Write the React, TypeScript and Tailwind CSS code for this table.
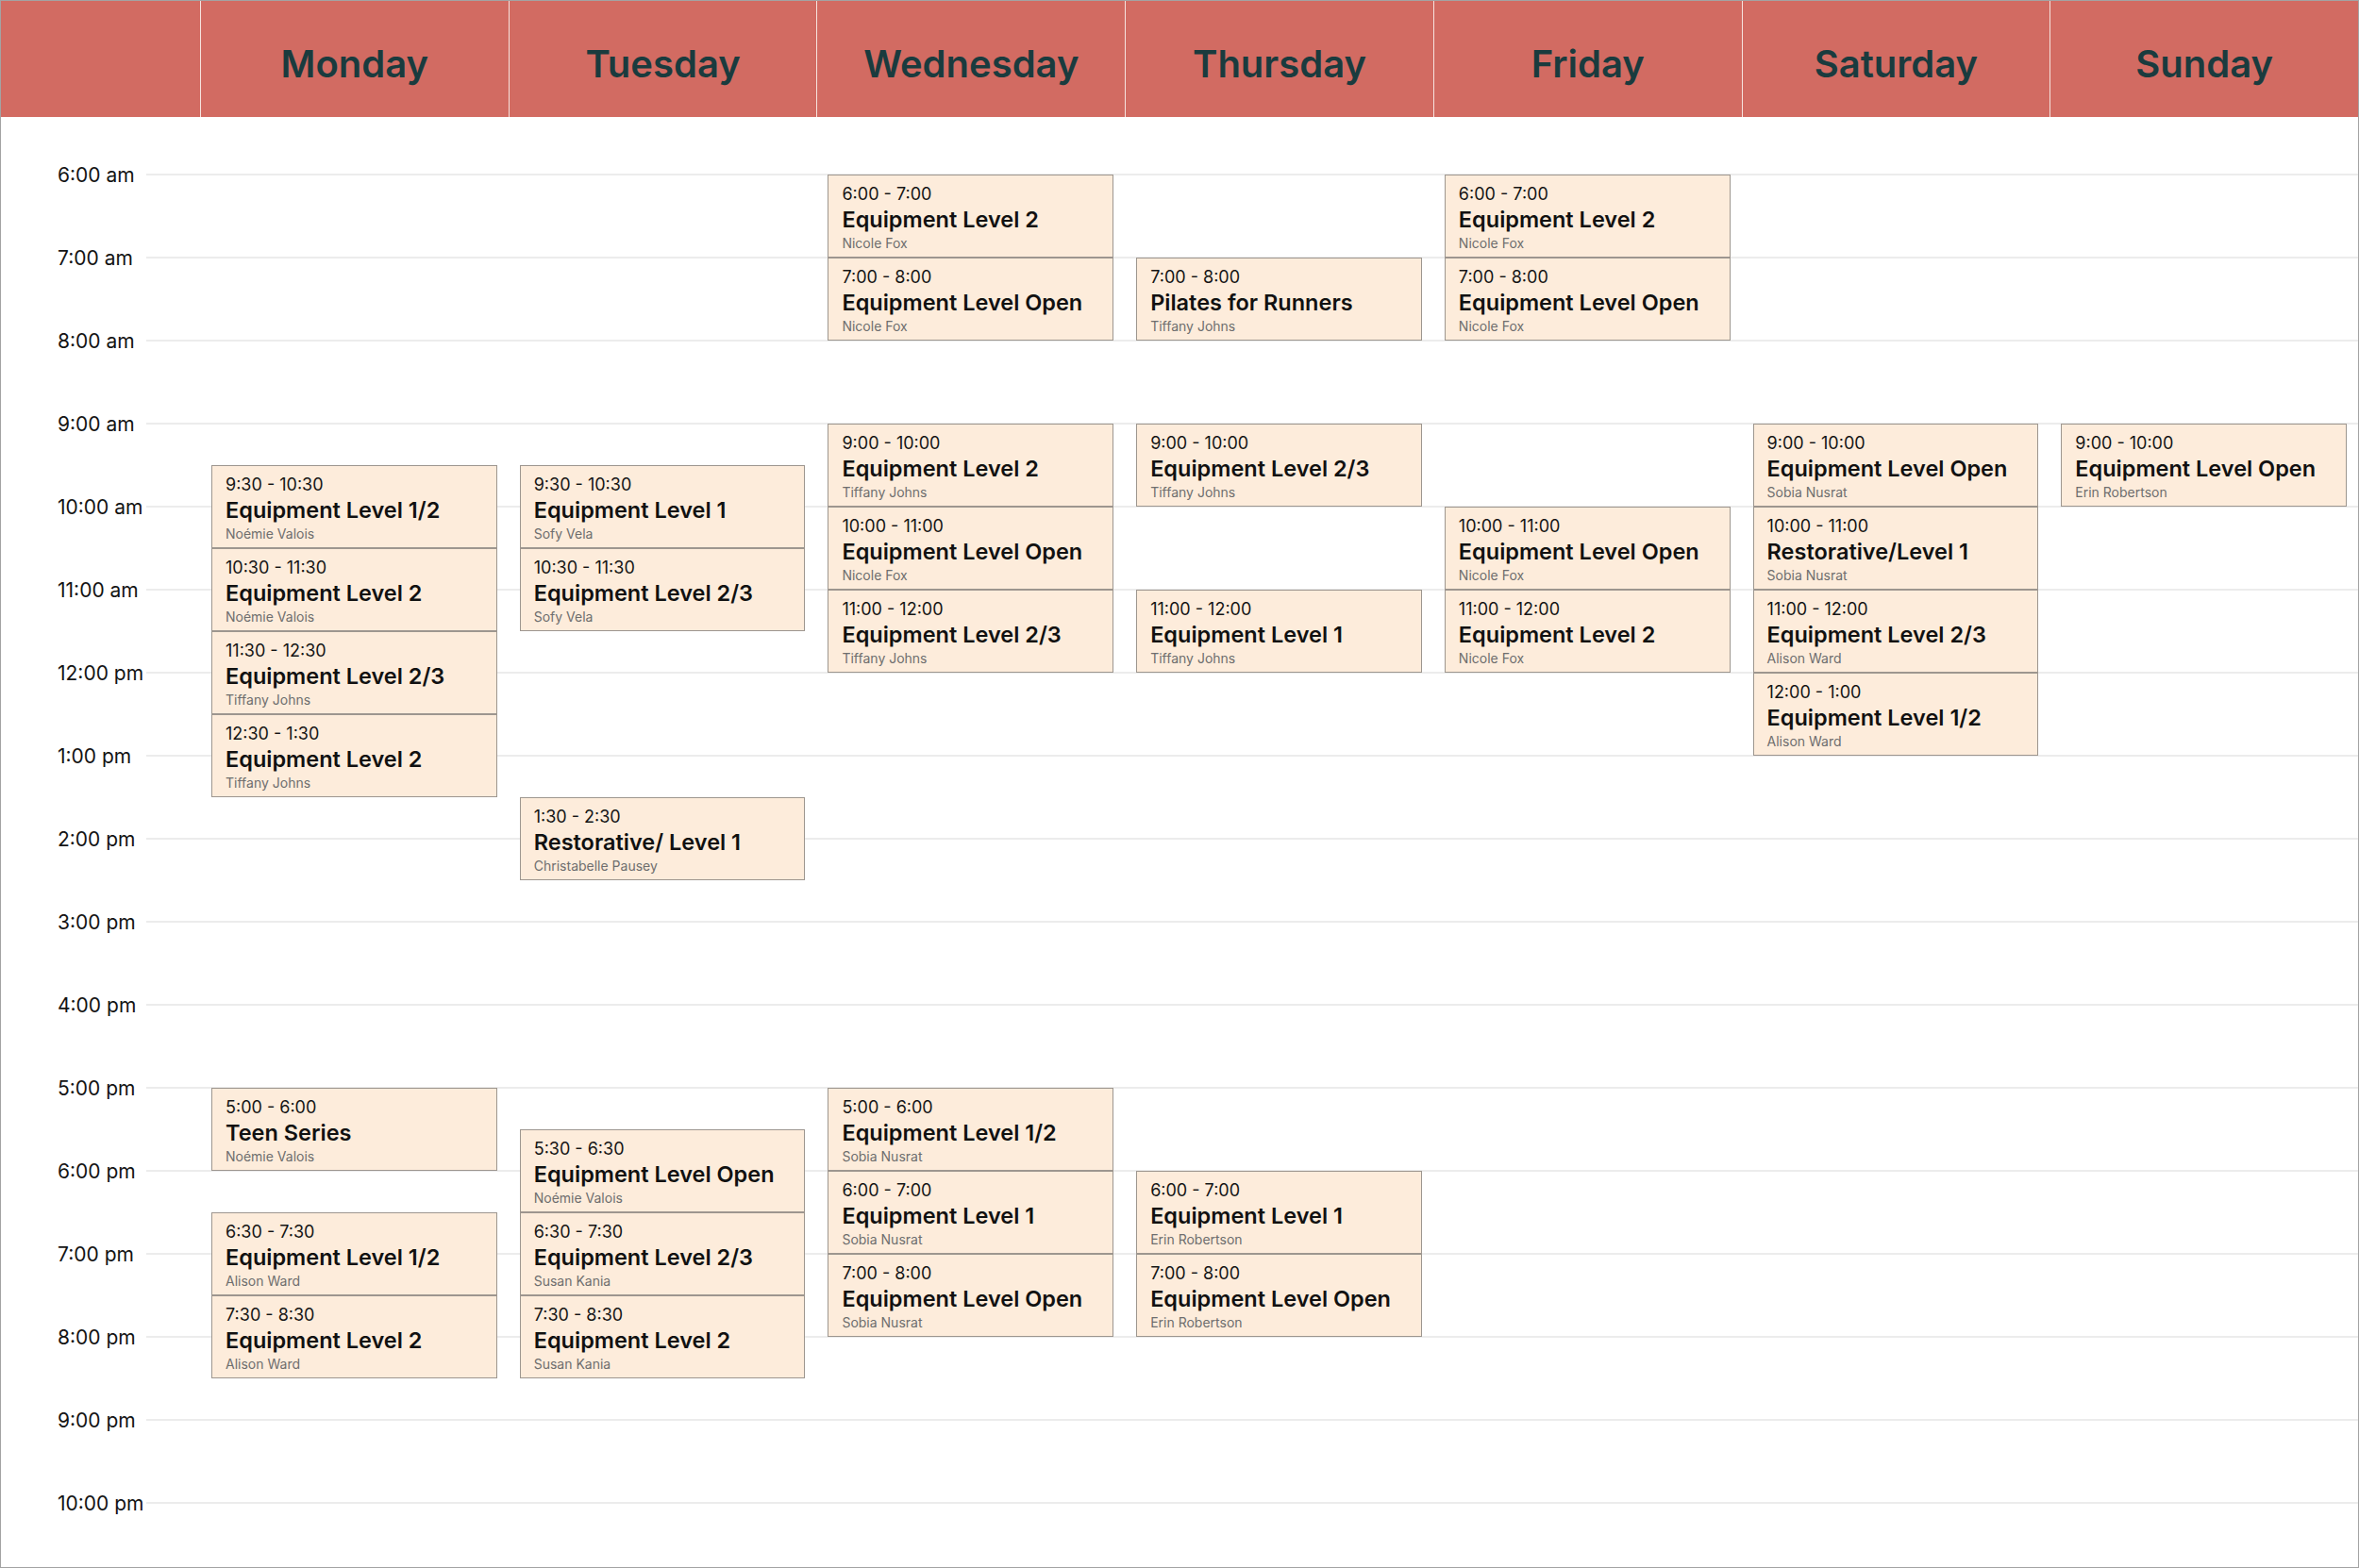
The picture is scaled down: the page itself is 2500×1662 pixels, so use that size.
type Slot = {
  day: number;
  start: number;
  end: number;
  time: string;
  title: string;
  teacher: string;
};

const days = ["Monday", "Tuesday", "Wednesday", "Thursday", "Friday", "Saturday", "Sunday"];

const hours = [
  "6:00 am", "7:00 am", "8:00 am", "9:00 am", "10:00 am", "11:00 am", "12:00 pm", "1:00 pm", "2:00 pm",
  "3:00 pm", "4:00 pm", "5:00 pm", "6:00 pm", "7:00 pm", "8:00 pm", "9:00 pm", "10:00 pm",
];

const classes: Slot[] = [
  // monday
  { day: 0, start: 9.5, end: 10.5, time: "9:30 - 10:30", title: "Equipment Level 1/2", teacher: "Noémie Valois" },
  { day: 0, start: 10.5, end: 11.5, time: "10:30 - 11:30", title: "Equipment Level 2", teacher: "Noémie Valois" },
  { day: 0, start: 11.5, end: 12.5, time: "11:30 - 12:30", title: "Equipment Level 2/3", teacher: "Tiffany Johns" },
  { day: 0, start: 12.5, end: 13.5, time: "12:30 - 1:30", title: "Equipment Level 2", teacher: "Tiffany Johns" },
  { day: 0, start: 17, end: 18, time: "5:00 - 6:00", title: "Teen Series", teacher: "Noémie Valois" },
  { day: 0, start: 18.5, end: 19.5, time: "6:30 - 7:30", title: "Equipment Level 1/2", teacher: "Alison Ward" },
  { day: 0, start: 19.5, end: 20.5, time: "7:30 - 8:30", title: "Equipment Level 2", teacher: "Alison Ward" },
  // tuesday
  { day: 1, start: 9.5, end: 10.5, time: "9:30 - 10:30", title: "Equipment Level 1", teacher: "Sofy Vela" },
  { day: 1, start: 10.5, end: 11.5, time: "10:30 - 11:30", title: "Equipment Level 2/3", teacher: "Sofy Vela" },
  { day: 1, start: 13.5, end: 14.5, time: "1:30 - 2:30", title: "Restorative/ Level 1", teacher: "Christabelle Pausey" },
  { day: 1, start: 17.5, end: 18.5, time: "5:30 - 6:30", title: "Equipment Level Open", teacher: "Noémie Valois" },
  { day: 1, start: 18.5, end: 19.5, time: "6:30 - 7:30", title: "Equipment Level 2/3", teacher: "Susan Kania" },
  { day: 1, start: 19.5, end: 20.5, time: "7:30 - 8:30", title: "Equipment Level 2", teacher: "Susan Kania" },
  // wednesday
  { day: 2, start: 6, end: 7, time: "6:00 - 7:00", title: "Equipment Level 2", teacher: "Nicole Fox" },
  { day: 2, start: 7, end: 8, time: "7:00 - 8:00", title: "Equipment Level Open", teacher: "Nicole Fox" },
  { day: 2, start: 9, end: 10, time: "9:00 - 10:00", title: "Equipment Level 2", teacher: "Tiffany Johns" },
  { day: 2, start: 10, end: 11, time: "10:00 - 11:00", title: "Equipment Level Open", teacher: "Nicole Fox" },
  { day: 2, start: 11, end: 12, time: "11:00 - 12:00", title: "Equipment Level 2/3", teacher: "Tiffany Johns" },
  { day: 2, start: 17, end: 18, time: "5:00 - 6:00", title: "Equipment Level 1/2", teacher: "Sobia Nusrat" },
  { day: 2, start: 18, end: 19, time: "6:00 - 7:00", title: "Equipment Level 1", teacher: "Sobia Nusrat" },
  { day: 2, start: 19, end: 20, time: "7:00 - 8:00", title: "Equipment Level Open", teacher: "Sobia Nusrat" },
  // thursday
  { day: 3, start: 7, end: 8, time: "7:00 - 8:00", title: "Pilates for Runners", teacher: "Tiffany Johns" },
  { day: 3, start: 9, end: 10, time: "9:00 - 10:00", title: "Equipment Level 2/3", teacher: "Tiffany Johns" },
  { day: 3, start: 11, end: 12, time: "11:00 - 12:00", title: "Equipment Level 1", teacher: "Tiffany Johns" },
  { day: 3, start: 18, end: 19, time: "6:00 - 7:00", title: "Equipment Level 1", teacher: "Erin Robertson" },
  { day: 3, start: 19, end: 20, time: "7:00 - 8:00", title: "Equipment Level Open", teacher: "Erin Robertson" },
  // friday
  { day: 4, start: 6, end: 7, time: "6:00 - 7:00", title: "Equipment Level 2", teacher: "Nicole Fox" },
  { day: 4, start: 7, end: 8, time: "7:00 - 8:00", title: "Equipment Level Open", teacher: "Nicole Fox" },
  { day: 4, start: 10, end: 11, time: "10:00 - 11:00", title: "Equipment Level Open", teacher: "Nicole Fox" },
  { day: 4, start: 11, end: 12, time: "11:00 - 12:00", title: "Equipment Level 2", teacher: "Nicole Fox" },
  // saturday
  { day: 5, start: 9, end: 10, time: "9:00 - 10:00", title: "Equipment Level Open", teacher: "Sobia Nusrat" },
  { day: 5, start: 10, end: 11, time: "10:00 - 11:00", title: "Restorative/Level 1", teacher: "Sobia Nusrat" },
  { day: 5, start: 11, end: 12, time: "11:00 - 12:00", title: "Equipment Level 2/3", teacher: "Alison Ward" },
  { day: 5, start: 12, end: 13, time: "12:00 - 1:00", title: "Equipment Level 1/2", teacher: "Alison Ward" },
  // sunday
  { day: 6, start: 9, end: 10, time: "9:00 - 10:00", title: "Equipment Level Open", teacher: "Erin Robertson" },
];

const ClassCard = ({ slot }: { slot: Slot }) => {
  const row = (slot.start - 6) * 2 + 1;
  const span = (slot.end - slot.start) * 2;
  return (
    <div
      className="relative z-10 mx-[12px] bg-[#fdecdb] border border-[#9d968f] pl-[14px] pt-[9px] overflow-hidden"
      style={{ gridColumn: slot.day + 2, gridRow: `${row} / span ${span}` }}
    >
      <div className="text-[18px] leading-[22px] text-[#151515]">{slot.time}</div>
      <div className="mt-[2px] text-[23.5px] leading-[28px] font-semibold text-[#111]">{slot.title}</div>
      <div className="mt-[2px] text-[14px] leading-[18px] text-[#6e6e6e]">{slot.teacher}</div>
    </div>
  );
};

export default function App() {
  return (
    <div className="w-full h-[1662px] flex flex-col border border-[#a3a3a3] bg-white font-['Inter','Liberation_Sans',sans-serif] overflow-hidden">
      <div className="grid grid-cols-[211px_repeat(7,minmax(0,1fr))] h-[123px] bg-[#d26b62] shrink-0">
        <div />
        {days.map((d) => (
          <div
            key={d}
            className="border-l border-[#f6e3de] flex items-center justify-center text-[40px] font-semibold text-[#1a3b3e] pt-[10px]"
          >
            {d}
          </div>
        ))}
      </div>

      <div className="flex-1 grid grid-cols-[211px_repeat(7,minmax(0,1fr))] grid-rows-[repeat(33,44px)] pt-[61px]">
        {hours.map((h, i) => (
          <div
            key={h}
            className="col-[1/-1] relative"
            style={{ gridRow: i * 2 + 1 }}
          >
            <div className="absolute left-[154px] right-0 top-[-1px] h-[2px] bg-[#ececec]" />
            <div className="absolute left-[60px] top-[-11px] text-[21px] leading-[24px] text-[#141414]">{h}</div>
          </div>
        ))}
        {classes.map((c, i) => (
          <ClassCard key={i} slot={c} />
        ))}
      </div>
    </div>
  );
}
